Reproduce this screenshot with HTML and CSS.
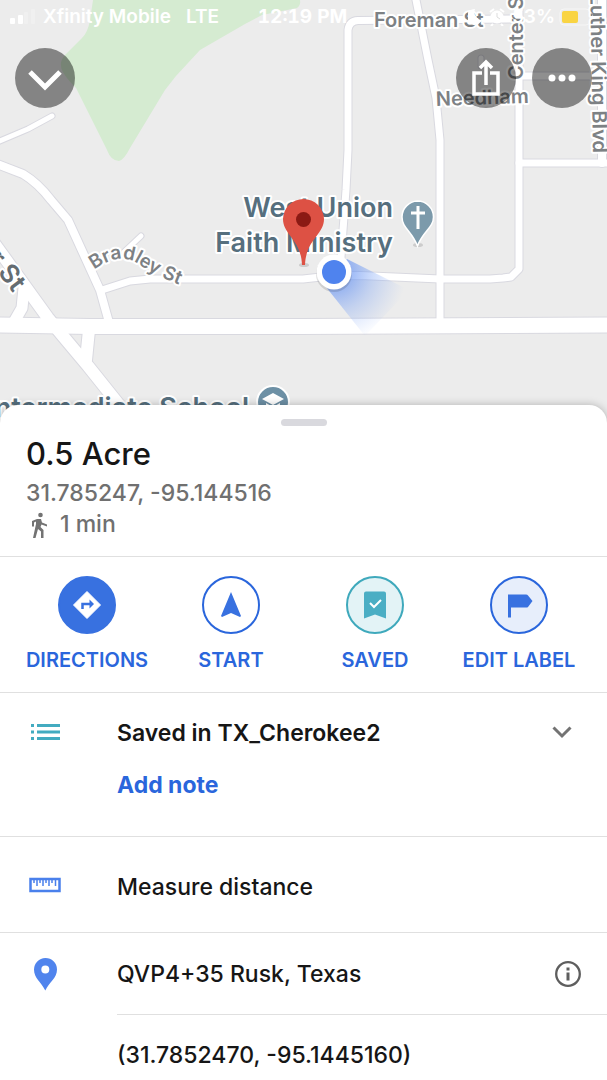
FILE: index.html
```html
<!DOCTYPE html>
<html lang="en">
<head>
<meta charset="utf-8">
<meta name="viewport" content="width=device-width, initial-scale=1">
<title>0.5 Acre</title>
<link rel="stylesheet" href="styles.css">
</head>
<body>
<main class="app">
  <section class="map" aria-label="Map">
    <svg class="map-canvas" viewBox="0 0 607 430">
      <defs>
        <path id="bradley" d="M94 270Q118 252 137 263Q155 276 195 291"/>
        <radialGradient id="beam" gradientUnits="userSpaceOnUse" cx="334" cy="272" r="72">
          <stop offset="0.1" stop-color="#5b8af0" stop-opacity="0.75"/>
          <stop offset="0.55" stop-color="#7aa2f5" stop-opacity="0.35"/>
          <stop offset="1" stop-color="#8fb0f7" stop-opacity="0"/>
        </radialGradient>
        <g id="roads">
          <path class="w6" d="M-5 143L28 129L52 116"/>
          <path class="w9" d="M-8 162L23 174Q38 183 51 200L68 220L100 290L110 326"/>
          <path class="w8" d="M102 290L130 281L150 279H303L330 276L360 275.500L440 279H490L503 278L511 277L519 269V0"/>
          <path class="w8" d="M415 -5L428 60L436 98L440 140V324"/>
          <path class="w8" d="M336 275L341 257L346 190L348 150V30Q349 21 358 20.500L519 19"/>
          <path class="w8" d="M519 163H610M519 76H610"/>
          <path class="w6" d="M481 58V66"/>
          <path class="w9" d="M602 0V163"/>
          <path class="w6" d="M141 236L124 252"/>
          <path class="w13" d="M-14 232L48 318L62 335L88 366L128 416"/>
          <path class="w11" d="M24 288L22 308L14 322"/>
          <path class="w13" d="M89 330L86 360"/>
          <path class="w16" d="M-8 325L90 326.500H300L615 325"/>
        </g>
      </defs>
      <rect class="land" width="607" height="430"/>
      <path class="park" d="M93 0L90 20Q88 32 82 38L66 54Q60 60 61 66Q61 73 76 88L107 150Q111 161 119 161Q124 160 130 148L165 90L176 76L200 50L245 24L262 15L297 8Q301 5 300 0Z"/>
      <use href="#roads" class="casing"/>
      <use href="#roads" class="fill"/>
      <text class="street" x="374" y="27">Foreman St</text>
      <text class="street" x="436" y="106" transform="rotate(-2 436 106)">Needham</text>
      <text class="street" transform="translate(523 80) rotate(-90)">Center St</text>
      <text class="street" text-anchor="end" transform="translate(593 153) rotate(89)">Luther King Blvd</text>
      <text class="street curved"><textPath href="#bradley">Bradley St</textPath></text>
      <text class="street main" text-anchor="end" transform="translate(13 293) rotate(53)">er St</text>
      <g class="place" text-anchor="end">
        <text x="393" y="217">West Union</text>
        <text x="393" y="252">Faith Ministry</text>
        <text class="school" x="249" y="417">Intermediate School</text>
      </g>
      <circle cx="273" cy="402" r="16" fill="#6d90a5" stroke="#fff" stroke-width="2"/>
      <path d="M273 393L262 399L273 405L284 399ZM266 403V407Q273 413 280 407V403L273 407Z" fill="#fff"/>
      <ellipse cx="418" cy="245" rx="5" ry="2" fill="#ccc"/>
      <path d="M417.500 201A16 16 0 0 0 402 217C402 228 412 231 417.500 246C423 231 433.500 228 433.500 217A16 16 0 0 0 417.500 201Z" fill="#7c9aab" stroke="#fff" stroke-width="1.500"/>
      <path d="M418 206V229M411 213H425" stroke="#fff" stroke-width="3"/>
      <ellipse cx="304" cy="265" rx="5" ry="2" fill="#ccc"/>
      <path d="M303.500 199A20.500 20.500 0 0 0 283 219C283 235 301 239 302 265H305C306 239 324 235 324 219A20.500 20.500 0 0 0 303.500 199Z" fill="#dd5144"/>
      <circle cx="303.500" cy="219.500" r="7.500" fill="#8b1a14"/>
      <path d="M334 272L347 259L409 290L365 336L326 287Z" fill="url(#beam)"/>
      <circle cx="334" cy="274" r="18" fill="#000" opacity="0.12"/>
      <circle cx="334" cy="272" r="17.500" fill="#fff"/>
      <circle cx="334" cy="272" r="12" fill="#4f83ee"/>
    </svg>
    <div class="overlay">
      <div class="status">
        <span class="carrier">
          <svg width="25" height="16" viewBox="0 0 25 16" fill="#fff" aria-hidden="true"><rect y="9" width="5" height="6" rx="1"/><rect x="8" y="6" width="5" height="9" rx="1"/><g opacity="0.25"><rect x="14" y="3" width="4" height="12" rx="1"/><rect x="21" width="4" height="15" rx="1"/></g></svg>
          <span>Xfinity Mobile</span><span class="network">LTE</span>
        </span>
        <span class="clock">12:19 PM</span>
        <span class="battery">
          <svg width="40" height="18" viewBox="0 0 40 18" aria-hidden="true"><path d="M7 1A8 8 0 1 0 14 12A8 8 0 0 1 7 1Z" fill="#fff"/><circle cx="29" cy="9" r="6.500" fill="#fff"/><path d="M22 4L26 1M32 1L36 4M25 16L23 18M33 16L35 18" stroke="#fff" stroke-width="2"/><path d="M29 5V9L32 11" stroke="#ddd" fill="none"/></svg>
          <span>53%</span>
          <svg width="36" height="18" viewBox="0 0 36 18" aria-hidden="true"><rect x="1" y="1" width="30" height="16" rx="4" fill="none" stroke="#fff" opacity="0.5"/><rect x="3" y="3" width="16" height="12" rx="2" fill="#f9d443"/><path d="M33 6Q36 9 33 12Z" fill="#fff" opacity="0.5"/></svg>
        </span>
      </div>
      <div class="controls">
        <button class="round" aria-label="Close"><svg width="60" height="60" viewBox="0 0 60 60"><path d="M15 24L30 39L45 24" fill="none" stroke="#fff" stroke-width="5"/></svg></button>
        <button class="round share" aria-label="Share"><svg width="60" height="60" viewBox="0 0 60 60" fill="none" stroke="#fff" stroke-width="3.500"><path d="M26 25H18V46H42V25H34M30 37V14M24 20L30 14L36 20"/></svg></button>
        <button class="round" aria-label="More"><svg width="60" height="60" viewBox="0 0 60 60" fill="#fff"><circle cx="20" cy="30" r="3.500"/><circle cx="30" cy="30" r="3.500"/><circle cx="40" cy="30" r="3.500"/></svg></button>
      </div>
    </div>
  </section>

  <section class="sheet">
    <header class="summary">
      <div class="handle"></div>
      <h1 class="title">0.5 Acre</h1>
      <p class="detail">31.785247, -95.144516</p>
      <p class="detail walk">
        <svg width="17" height="26" viewBox="0 0 17 26" aria-hidden="true"><circle cx="9.500" cy="3" r="2.300" fill="#737373"/><path d="M6 7L10 7L11 10.500L16 12.500V14.500L10.500 12.500L9.500 15L12.500 18V26H10V19.500L7 17L4.500 26H2L5 12V9.500L3 10.500V14.500H1V9Z" fill="#737373"/></svg>
        <span>1 min</span>
      </p>
    </header>

    <nav class="actions" aria-label="Place actions">
      <button class="action">
        <span class="disc solid"><svg width="30" height="30" viewBox="0 0 30 30"><path d="M15 1.500L28.500 15L15 28.500L1.500 15Z" fill="#fff" stroke="#fff" stroke-linejoin="round"/><path d="M10.500 19V14H18" fill="none" stroke="#3871e0" stroke-width="2.500"/><path d="M17.500 9.500L22 14L17.500 18.500Z" fill="#3871e0"/></svg></span>
        <span>DIRECTIONS</span>
      </button>
      <button class="action">
        <span class="disc"><svg width="30" height="30" viewBox="0 0 30 30"><path d="M15 2L25 26L24 27L15 23L6 27L5 26Z" fill="#3871e0"/></svg></span>
        <span>START</span>
      </button>
      <button class="action">
        <span class="disc saved"><svg width="30" height="30" viewBox="0 0 30 30"><path d="M6 1.500H24Q26 1.500 26 3.500V28.500L15 24.500L4 28.500V3.500Q4 1.500 6 1.500Z" fill="#4baec4"/><path d="M10 13L14 17L21 10" fill="none" stroke="#fff" stroke-width="2"/></svg></span>
        <span>SAVED</span>
      </button>
      <button class="action">
        <span class="disc label"><svg width="30" height="30" viewBox="0 0 30 30"><path d="M4 4.500H22Q23.500 4.500 24 5.500L28.500 11L24 17Q23.500 17.500 22 17.500H7V27.500H4Z" fill="#3871e0"/></svg></span>
        <span>EDIT LABEL</span>
      </button>
    </nav>

    <div class="row saved-row">
      <svg class="row-icon" width="32" height="28" viewBox="0 0 32 28" fill="#43abc0" aria-hidden="true"><path d="M2 5h3v3H2zM8 5h23v3H8zM2 11.500h3v3H2zM8 11.500h23v3H8zM2 18h3v3H2zM8 18h23v3H8z"/></svg>
      <h2 class="text strong">Saved in TX_Cherokee2</h2>
      <button class="plain chevron" aria-label="Expand"><svg width="20" height="28" viewBox="0 0 20 28"><path d="M1.500 8.500L10 17L18.500 8.500" fill="none" stroke="#737373" stroke-width="3"/></svg></button>
      <button class="plain note">Add note</button>
    </div>

    <div class="row measure-row">
      <svg class="row-icon" width="32" height="28" viewBox="0 0 32 28" fill="none" stroke="#4a80ec" aria-hidden="true"><path d="M1.500 6H30.500V18H1.500Z" stroke-width="2.500"/><path d="M5 6V10M8 6V13M11 6V10M14 6V13M17 6V10M20 6V13M23 6V10M26.500 6V13" stroke-width="1.500"/></svg>
      <button class="plain text">Measure distance</button>
    </div>

    <div class="row code-row">
      <svg class="row-icon" width="32" height="34" viewBox="0 0 32 34" aria-hidden="true"><path fill-rule="evenodd" d="M16.300 1A11.500 11.500 0 0 0 5 12.500C5 21 12 25 16.300 33.500C20.500 25 28 21 28 12.500A11.500 11.500 0 0 0 16.300 1ZM16.300 8.500A4 4 0 1 1 16.300 16.500A4 4 0 1 1 16.300 8.500Z" fill="#5084ed"/></svg>
      <p class="text">QVP4+35 Rusk, Texas</p>
      <button class="plain info" aria-label="About plus codes"><svg width="28" height="28" viewBox="0 0 28 28"><circle cx="14" cy="14" r="11.800" fill="none" stroke="#5e5e5e" stroke-width="2.300"/><path d="M12.500 7.500H15.500V10.500H12.500ZM12.500 12.500H15.500V20.500H12.500Z" fill="#5e5e5e"/></svg></button>
    </div>

    <div class="coords">
      <p class="text">(31.7852470, -95.1445160)</p>
    </div>
  </section>
</main>
</body>
</html>
```
FILE: styles.css
```css
* {
  box-sizing: border-box;
}

body {
  margin: 0;
  background: #fff;
  color: #161616;
  font-family: Inter, "Liberation Sans", sans-serif;
  font-size: 23px;
  line-height: 28px;
}

h1, h2, p {
  margin: 0;
}

button {
  padding: 0;
  border: 0;
  background: none;
  color: inherit;
  font: inherit;
  cursor: pointer;
}

svg {
  display: block;
}

/* Map */
.map {
  position: relative;
  overflow: hidden;
}

.map-canvas {
  width: 100%;
  height: auto;
}

.land { fill: #ececec; }
.park { fill: #d5ebd1; }

.casing,
.fill {
  fill: none;
  stroke-linecap: round;
  stroke-linejoin: round;
}

.casing {
  stroke: #d9d9e0;
  --edge: 2px;
}

.fill {
  stroke: #fff;
  --edge: 0px;
}

.w6 { stroke-width: calc(5px + var(--edge)); }
.w8 { stroke-width: calc(7px + var(--edge)); }
.w9 { stroke-width: calc(8px + var(--edge)); }
.w11 { stroke-width: calc(11px + var(--edge)); }
.w13 { stroke-width: calc(12px + var(--edge)); }
.w16 { stroke-width: calc(15px + var(--edge)); }

.street,
.place {
  paint-order: stroke;
  stroke: #fff;
  stroke-width: 4px;
  stroke-linejoin: round;
}

.street {
  fill: #7d8184;
  font-size: 20px;
  font-weight: 600;
}

.curved {
  font-size: 19px;
}

.main {
  fill: #646c71;
  font-size: 26px;
}

.place {
  fill: #566f7e;
  font-size: 27px;
  font-weight: 600;
}

.overlay {
  position: absolute;
  inset: 0;
}

.status {
  display: grid;
  grid-template-columns: 1fr auto 1fr;
  align-items: center;
  padding: 4px 12px 0 10px;
  color: #fff;
  font-size: 19px;
  font-weight: 600;
  line-height: 26px;
}

.carrier,
.battery {
  display: flex;
  align-items: center;
  gap: 8px;
}

.network {
  padding-left: 7px;
}

.clock {
  font-weight: 700;
  font-variant-numeric: tabular-nums;
}

.battery {
  justify-content: flex-end;
  gap: 4px;
}

.controls {
  display: flex;
  gap: 16px;
  padding: 18px 15px 0;
}

.round {
  border-radius: 50%;
  background: rgba(0, 0, 0, 0.44);
}

.share {
  margin-left: auto;
}

/* Bottom sheet */
.sheet {
  position: relative;
  margin-top: -25px;
  border-radius: 18px 18px 0 0;
  background: #fff;
  box-shadow: 0 0 8px rgba(0, 0, 0, 0.25);
}

.summary {
  padding: 14px 26px 16px;
  border-bottom: 1px solid #e0e0e0;
}

.handle {
  width: 46px;
  height: 7px;
  margin: 0 auto 8px;
  border-radius: 4px;
  background: #d9d9de;
}

.title {
  margin-bottom: 4px;
  font-size: 31px;
  font-weight: 500;
  line-height: 40px;
}

.detail {
  color: #707070;
  font-weight: 500;
  line-height: 31px;
}

.walk {
  display: flex;
  align-items: center;
  gap: 12px;
  padding-left: 5px;
}

.actions {
  display: grid;
  grid-template-columns: repeat(4, 1fr);
  padding: 19px 16px 20px 15px;
  border-bottom: 1px solid #e0e0e0;
}

.action {
  display: flex;
  flex-direction: column;
  align-items: center;
  gap: 14px;
  color: #2a66dc;
  font-size: 20px;
  font-weight: 600;
  line-height: 24px;
  white-space: nowrap;
}

.disc {
  display: grid;
  place-items: center;
  width: 58px;
  height: 58px;
  border: 2px solid #2a66dc;
  border-radius: 50%;
}

.solid {
  border-color: #3871e0;
  background: #3871e0;
}

.disc.saved {
  border-color: #3fa9bc;
  background: #e3f3f6;
}

.disc.label {
  background: #e7eefb;
}

.row {
  display: grid;
  grid-template-columns: 88px 1fr auto;
  align-items: center;
  padding-left: 29px;
  border-bottom: 1px solid #e0e0e0;
}

.text {
  font-size: 23px;
  font-weight: 500;
  line-height: 28px;
  text-align: left;
}

.strong {
  font-weight: 600;
}

.saved-row {
  row-gap: 24px;
  padding-top: 26px;
  padding-right: 35px;
  padding-bottom: 37px;
}

.note {
  grid-column: 2;
  justify-self: start;
  color: #2a66dc;
  font-weight: 700;
}

.measure-row {
  padding-top: 36px;
  padding-bottom: 31px;
}

.code-row {
  padding: 24px 25px 23px 29px;
  border-bottom: 0;
}

.coords {
  margin-left: 117px;
  padding: 26px 0 10px;
  border-top: 1px solid #e0e0e0;
}
```
